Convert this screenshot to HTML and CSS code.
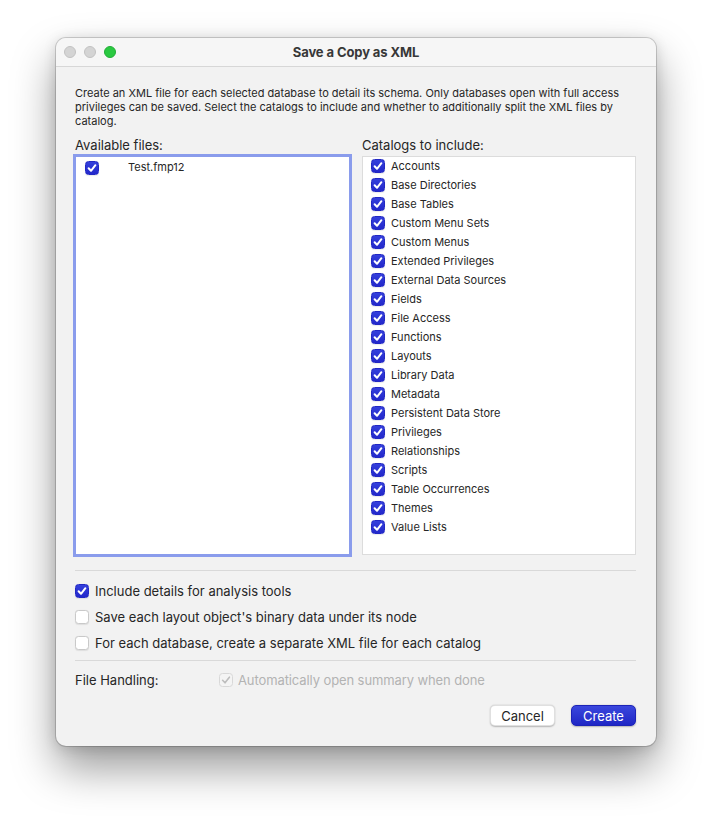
FILE: index.html
```html
<!DOCTYPE html>
<html>
<head>
<meta charset="utf-8">
<title>Save a Copy as XML</title>
<link rel="stylesheet" href="styles.css">
</head>
<body>
<div class="window">
  <div class="titlebar">
    <div class="lights">
      <span class="light"></span>
      <span class="light"></span>
      <span class="light green"></span>
    </div>
    <div class="title">Save a Copy as XML</div>
  </div>
  <div class="content">
    <p class="desc">Create an XML file for each selected database to detail its schema. Only databases open with full access privileges can be saved. Select the catalogs to include and whether to additionally split the XML files by catalog.</p>
    <div class="columns">
      <div class="col">
        <div class="label">Available files:</div>
        <div class="list files">
          <div class="file-row">
            <span class="cb on"><svg viewBox="0 0 14 14"><path d="M3.6 7.3 L6 9.8 L10.4 4.2"/></svg></span>
            <span class="file-name">Test.fmp12</span>
          </div>
        </div>
      </div>
      <div class="col">
        <div class="label">Catalogs to include:</div>
        <div class="list catalogs">
          <div class="row"><span class="cb on"><svg viewBox="0 0 14 14"><path d="M3.6 7.3 L6 9.8 L10.4 4.2"/></svg></span><span>Accounts</span></div>
          <div class="row"><span class="cb on"><svg viewBox="0 0 14 14"><path d="M3.6 7.3 L6 9.8 L10.4 4.2"/></svg></span><span>Base Directories</span></div>
          <div class="row"><span class="cb on"><svg viewBox="0 0 14 14"><path d="M3.6 7.3 L6 9.8 L10.4 4.2"/></svg></span><span>Base Tables</span></div>
          <div class="row"><span class="cb on"><svg viewBox="0 0 14 14"><path d="M3.6 7.3 L6 9.8 L10.4 4.2"/></svg></span><span>Custom Menu Sets</span></div>
          <div class="row"><span class="cb on"><svg viewBox="0 0 14 14"><path d="M3.6 7.3 L6 9.8 L10.4 4.2"/></svg></span><span>Custom Menus</span></div>
          <div class="row"><span class="cb on"><svg viewBox="0 0 14 14"><path d="M3.6 7.3 L6 9.8 L10.4 4.2"/></svg></span><span>Extended Privileges</span></div>
          <div class="row"><span class="cb on"><svg viewBox="0 0 14 14"><path d="M3.6 7.3 L6 9.8 L10.4 4.2"/></svg></span><span>External Data Sources</span></div>
          <div class="row"><span class="cb on"><svg viewBox="0 0 14 14"><path d="M3.6 7.3 L6 9.8 L10.4 4.2"/></svg></span><span>Fields</span></div>
          <div class="row"><span class="cb on"><svg viewBox="0 0 14 14"><path d="M3.6 7.3 L6 9.8 L10.4 4.2"/></svg></span><span>File Access</span></div>
          <div class="row"><span class="cb on"><svg viewBox="0 0 14 14"><path d="M3.6 7.3 L6 9.8 L10.4 4.2"/></svg></span><span>Functions</span></div>
          <div class="row"><span class="cb on"><svg viewBox="0 0 14 14"><path d="M3.6 7.3 L6 9.8 L10.4 4.2"/></svg></span><span>Layouts</span></div>
          <div class="row"><span class="cb on"><svg viewBox="0 0 14 14"><path d="M3.6 7.3 L6 9.8 L10.4 4.2"/></svg></span><span>Library Data</span></div>
          <div class="row"><span class="cb on"><svg viewBox="0 0 14 14"><path d="M3.6 7.3 L6 9.8 L10.4 4.2"/></svg></span><span>Metadata</span></div>
          <div class="row"><span class="cb on"><svg viewBox="0 0 14 14"><path d="M3.6 7.3 L6 9.8 L10.4 4.2"/></svg></span><span>Persistent Data Store</span></div>
          <div class="row"><span class="cb on"><svg viewBox="0 0 14 14"><path d="M3.6 7.3 L6 9.8 L10.4 4.2"/></svg></span><span>Privileges</span></div>
          <div class="row"><span class="cb on"><svg viewBox="0 0 14 14"><path d="M3.6 7.3 L6 9.8 L10.4 4.2"/></svg></span><span>Relationships</span></div>
          <div class="row"><span class="cb on"><svg viewBox="0 0 14 14"><path d="M3.6 7.3 L6 9.8 L10.4 4.2"/></svg></span><span>Scripts</span></div>
          <div class="row"><span class="cb on"><svg viewBox="0 0 14 14"><path d="M3.6 7.3 L6 9.8 L10.4 4.2"/></svg></span><span>Table Occurrences</span></div>
          <div class="row"><span class="cb on"><svg viewBox="0 0 14 14"><path d="M3.6 7.3 L6 9.8 L10.4 4.2"/></svg></span><span>Themes</span></div>
          <div class="row"><span class="cb on"><svg viewBox="0 0 14 14"><path d="M3.6 7.3 L6 9.8 L10.4 4.2"/></svg></span><span>Value Lists</span></div>
        </div>
      </div>
    </div>
    <div class="sep"></div>
    <div class="options">
      <div class="opt"><span class="cb on"><svg viewBox="0 0 14 14"><path d="M3.6 7.3 L6 9.8 L10.4 4.2"/></svg></span><span>Include details for analysis tools</span></div>
      <div class="opt"><span class="cb"></span><span>Save each layout object's binary data under its node</span></div>
      <div class="opt"><span class="cb"></span><span>For each database, create a separate XML file for each catalog</span></div>
    </div>
    <div class="sep"></div>
    <div class="handling">
      <span class="h-label">File Handling:</span>
      <span class="opt disabled"><span class="cb dis"><svg viewBox="0 0 14 14"><path d="M3.6 7.3 L6 9.8 L10.4 4.2"/></svg></span><span>Automatically open summary when done</span></span>
    </div>
    <div class="buttons">
      <button class="btn">Cancel</button>
      <button class="btn primary">Create</button>
    </div>
  </div>
</div>
</body>
</html>
```
FILE: styles.css
```css
* { box-sizing: border-box; }
html, body { margin: 0; padding: 0; background: #ffffff; }
body {
  font-family: Inter, "Noto Sans", "Liberation Sans", sans-serif;
  color: #262626;
  padding: 38px 0 0 56px;
  min-height: 820px;
}
.window {
  width: 600px;
  height: 708px;
  background: #f2f2f2;
  border-radius: 10px;
  box-shadow: 0 0 0 1px rgba(0,0,0,0.16), 0 22px 44px rgba(0,0,0,0.4), 0 2px 14px rgba(0,0,0,0.14);
  overflow: hidden;
  display: flex;
  flex-direction: column;
}
.titlebar {
  height: 29px;
  flex: none;
  background: #f6f6f6;
  border-bottom: 1px solid #d7d7d7;
  display: flex;
  align-items: center;
  position: relative;
}
.lights {
  display: flex;
  gap: 8px;
  padding-left: 8px;
  position: absolute;
  left: 0;
  top: 8px;
}
.light {
  width: 12px;
  height: 12px;
  border-radius: 50%;
  background: #d4d4d4;
  border: 0.5px solid #c2c2c2;
}
.light.green { background: #2ac941; border-color: #22ad36; }
.title {
  flex: 1;
  text-align: center;
  font-size: 13px;
  font-weight: 700;
  color: #383838;
  letter-spacing: -0.1px;
}
.content {
  flex: 1;
  padding: 19px 20px 19px 19px;
  display: flex;
  flex-direction: column;
}
.desc {
  margin: 0;
  font-size: 11px;
  line-height: 14px;
  color: #262626;
}
.columns {
  display: flex;
  gap: 12px;
  margin-top: 9px;
}
.col { display: flex; flex-direction: column; }
.col:first-child { width: 275px; }
.col:last-child { width: 274px; }
.label {
  font-size: 13px;
  line-height: 16px;
  height: 16px;
  margin-bottom: 3px;
  color: #262626;
}
.list {
  height: 399px;
  background: #ffffff;
  border: 1px solid #dcdcdc;
}
.list.files {
  border: 1px solid #8a9cec;
  box-shadow: 0 0 0 2px #8a9cec;
  padding: 3px 0 0 9px;
}
.file-row {
  display: flex;
  align-items: center;
  height: 15px;
  font-size: 11px;
}
.file-name { margin-left: 29px; margin-top: -2px; }
.catalogs { padding: 0 0 0 8px; }
.row {
  display: flex;
  align-items: center;
  height: 19px;
  font-size: 11px;
  gap: 6px;
}
.row:first-child { margin-top: -1px; }
.cb {
  width: 14px;
  height: 14px;
  flex: none;
  border-radius: 3.5px;
  background: #ffffff;
  border: 1px solid #c9c9c9;
  box-shadow: 0 0.5px 1px rgba(0,0,0,0.08);
  display: inline-flex;
}
.cb svg { width: 14px; height: 14px; margin: -1px; }
.cb path { fill: none; stroke: #ffffff; stroke-width: 2; stroke-linecap: round; stroke-linejoin: round; }
.cb.on {
  background: linear-gradient(#3440dc, #2328cb);
  border-color: #2228c4;
}
.cb.dis {
  background: #f4f4f4;
  border-color: #d8d8d8;
  box-shadow: none;
}
.cb.dis path { stroke: #bdbdbd; stroke-width: 1.6; }
.sep {
  height: 1px;
  background: #d9d9d9;
  flex: none;
}
.columns + .sep { margin-top: 15px; }
.options {
  display: flex;
  flex-direction: column;
  gap: 8px;
  padding: 11px 0 8px;
}
.opt {
  display: flex;
  align-items: center;
  height: 18px;
  gap: 6px;
  font-size: 13px;
}
.handling {
  display: flex;
  align-items: center;
  height: 18px;
  margin-top: 10px;
  font-size: 13px;
}
.h-label { width: 144px; }
.opt.disabled { color: #b3b3b3; gap: 5px; letter-spacing: -0.1px; }
.buttons {
  display: flex;
  justify-content: flex-end;
  gap: 16px;
  margin-top: 16px;
}
.btn {
  height: 21px;
  width: 65px;
  border-radius: 5px;
  font-family: inherit;
  font-size: 13px;
  color: #262626;
  background: #ffffff;
  border: 0.5px solid rgba(0,0,0,0.12);
  box-shadow: 0 0.5px 1.5px rgba(0,0,0,0.25);
  padding: 0;
}
.btn.primary {
  color: #ffffff;
  background: linear-gradient(#3a47dd, #1f27c5);
  border-color: #1c23b8;
}
```
